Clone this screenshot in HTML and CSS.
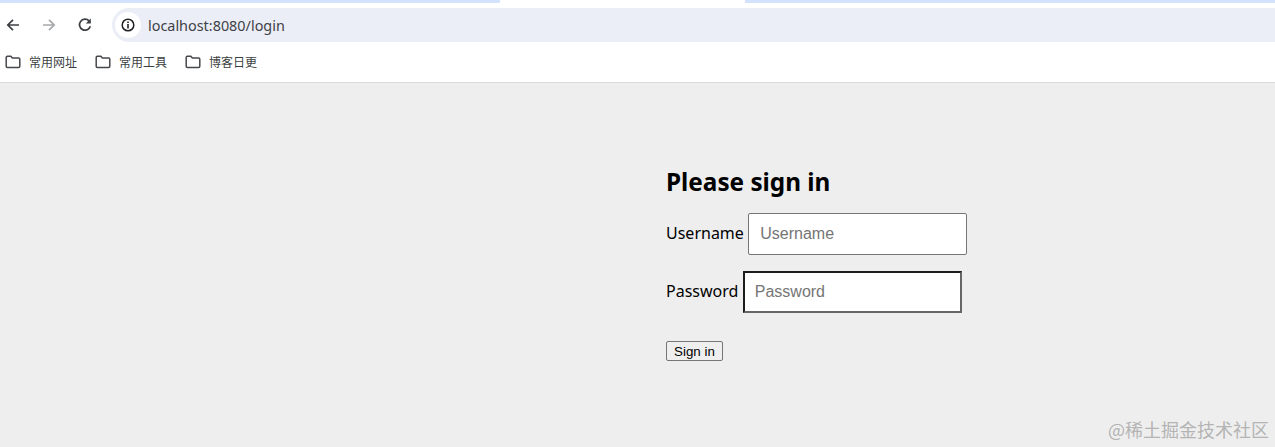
FILE: index.html
```html
<!DOCTYPE html>
<html lang="zh-CN">
<head>
  <meta charset="UTF-8">
  <title>Please sign in</title>
  <link rel="stylesheet" href="styles.css">
</head>
<body>
  <div class="tabstrip">
    <div class="tab_side tab_left"></div>
    <div class="tab_active"></div>
    <div class="tab_side tab_right"></div>
  </div>

  <div class="toolbar">
    <div class="nav_btns">
      <svg class="nav_icon" viewBox="0 0 16 16"><path d="M14 8H3M8 2.8 2.8 8 8 13.2" fill="none" stroke="#3c3f43" stroke-width="1.7"/></svg>
      <svg class="nav_icon" viewBox="0 0 16 16"><path d="M2 8h11M8 2.8 13.2 8 8 13.2" fill="none" stroke="#a6a8ab" stroke-width="1.7"/></svg>
      <svg class="nav_icon" viewBox="0 0 16 16"><path d="M13.3 9.2A5.5 5.5 0 1 1 12 3.9" fill="none" stroke="#3c3f43" stroke-width="1.7"/><path d="M13.8 1.6v5h-5z" fill="#3c3f43"/></svg>
    </div>
    <div class="omnibox">
      <span class="site_info">
        <svg class="info_icon" viewBox="0 0 14 14"><circle cx="7" cy="7" r="5.8" fill="none" stroke="#202124" stroke-width="1.5"/><path d="M6.2 6h1.6v4.4H6.2zM6.2 3.4h1.6V5H6.2z" fill="#202124"/></svg>
      </span>
      <span class="url">localhost:8080/login</span>
    </div>
  </div>

  <div class="bookmarks">
    <div class="bm_item"><svg class="bm_icon" viewBox="0 0 16 14"><path d="M1.2 2.4c0-.7.5-1.2 1.2-1.2h3.4l1.6 1.9h6.2c.7 0 1.2.5 1.2 1.2v7c0 .7-.5 1.2-1.2 1.2H2.4c-.7 0-1.2-.5-1.2-1.2z" fill="none" stroke="#46484c" stroke-width="1.5"/></svg>常用网址</div>
    <div class="bm_item"><svg class="bm_icon" viewBox="0 0 16 14"><path d="M1.2 2.4c0-.7.5-1.2 1.2-1.2h3.4l1.6 1.9h6.2c.7 0 1.2.5 1.2 1.2v7c0 .7-.5 1.2-1.2 1.2H2.4c-.7 0-1.2-.5-1.2-1.2z" fill="none" stroke="#46484c" stroke-width="1.5"/></svg>常用工具</div>
    <div class="bm_item"><svg class="bm_icon" viewBox="0 0 16 14"><path d="M1.2 2.4c0-.7.5-1.2 1.2-1.2h3.4l1.6 1.9h6.2c.7 0 1.2.5 1.2 1.2v7c0 .7-.5 1.2-1.2 1.2H2.4c-.7 0-1.2-.5-1.2-1.2z" fill="none" stroke="#46484c" stroke-width="1.5"/></svg>博客日更</div>
  </div>

  <div class="page">
    <form class="signin">
      <h2 class="signin_title">Please sign in</h2>
      <p class="row">
        <label class="lbl" for="username">Username</label>
        <input class="field" type="text" id="username" placeholder="Username">
      </p>
      <p class="row">
        <label class="lbl" for="password">Password</label>
        <input class="field field_focus" type="password" id="password" placeholder="Password">
      </p>
      <button class="submit" type="button">Sign in</button>
    </form>
    <div class="watermark">@稀土掘金技术社区</div>
  </div>
</body>
</html>
```

FILE: styles.css
```css
html, body {
  margin: 0;
  padding: 0;
  height: 447px;
  overflow: hidden;
}

body {
  background: #fff;
  font-family: "Noto Sans", "Noto Sans CJK SC", sans-serif;
  display: flex;
  flex-direction: column;
}

.tabstrip {
  display: flex;
  height: 3px;
}

.tab_side { background: #d3e3fd; }
.tab_left { width: 500px; }
.tab_active { width: 245px; background: #fff; }
.tab_right { flex: 1; }

.toolbar {
  display: flex;
  height: 39px;
  padding-top: 5px;
  box-sizing: border-box;
}

.nav_btns {
  display: flex;
  gap: 20px;
  width: 112px;
  padding: 9px 0 0 5px;
  box-sizing: border-box;
}

.nav_icon {
  width: 16px;
  height: 16px;
}

.omnibox {
  flex: 1;
  display: flex;
  align-items: center;
  background: #ebeef7;
  border-radius: 17px 0 0 17px;
  height: 34px;
}

.site_info {
  display: flex;
  align-items: center;
  justify-content: center;
  width: 26px;
  height: 26px;
  margin-left: 3px;
  background: #fff;
  border-radius: 50%;
}

.info_icon {
  width: 14px;
  height: 14px;
}

.url {
  margin-left: 7px;
  font-family: "Noto Sans", sans-serif;
  font-size: 14.4px;
  color: #3f4246;
}

.bookmarks {
  display: flex;
  gap: 18px;
  align-items: center;
  height: 41px;
  padding: 0 0 1px 5px;
  box-sizing: border-box;
  border-bottom: 1px solid #dadada;
}

.bm_item {
  display: flex;
  align-items: center;
  gap: 8px;
  font-family: "Noto Sans CJK SC", sans-serif;
  font-size: 12px;
  color: #3c3f43;
}

.bm_icon {
  width: 16px;
  height: 14px;
}

.page {
  position: relative;
  flex: 1;
  background: #eee;
  padding: 81px 0 0 666px;
  color: #000;
}

.signin_title {
  margin: 0 0 13px;
  font-size: 24.3px;
  line-height: 36px;
  font-weight: 700;
}

.row {
  display: flex;
  align-items: center;
  margin: 0 0 16px;
  height: 42px;
}

.lbl {
  font-size: 16px;
  line-height: 40px;
  align-self: flex-start;
  margin-right: 4.4px;
}

.field {
  width: 219px;
  height: 42px;
  box-sizing: border-box;
  padding: 0 11px;
  background: #fff;
  border: 1px solid #767676;
  border-radius: 2px;
  font-family: "Liberation Sans", sans-serif;
  font-size: 16px;
}

.field::placeholder { color: #757575; }

.field_focus {
  padding: 0 10px;
  border: 2px solid #1c1c1c;
  border-right-color: #666;
  border-bottom-color: #666;
  border-radius: 0;
}

.submit {
  display: block;
  width: 57px;
  height: 20px;
  margin-top: 28px;
  padding: 0;
  background: #efefef;
  border: 1px solid #767676;
  border-radius: 2px;
  font-family: "Liberation Sans", sans-serif;
  font-size: 13.33px;
  color: #000;
}

.watermark {
  position: absolute;
  right: 6px;
  bottom: 5px;
  font-family: "Noto Sans CJK SC", sans-serif;
  font-size: 18px;
  line-height: 26px;
  color: #b4b4b4;
}
```
